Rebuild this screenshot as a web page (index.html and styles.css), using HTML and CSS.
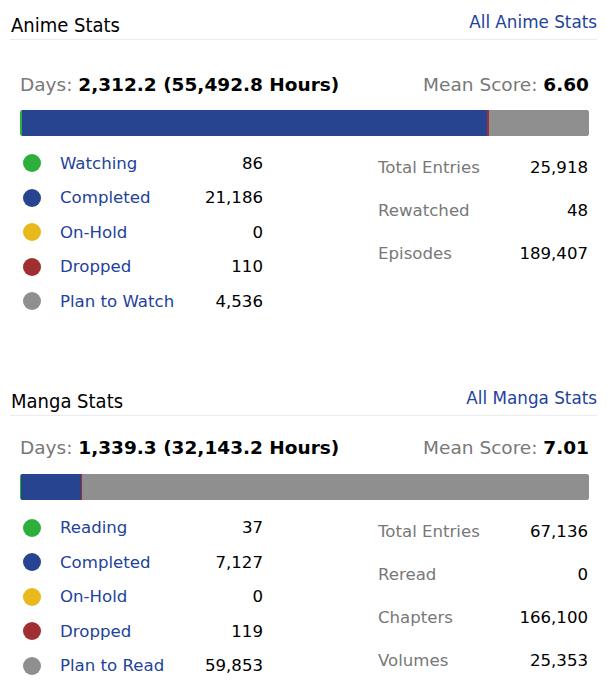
FILE: index.html
```html
<!DOCTYPE html>
<html>
<head>
<meta charset="utf-8">
<link rel="stylesheet" href="styles.css">
</head>
<body>
<div class="page">
  <section class="stats anime">
    <div class="head">
      <h2>Anime Stats</h2>
      <a class="all" href="#">All Anime Stats</a>
    </div>
    <div class="summary">
      <div><span class="lbl">Days:</span> <b>2,312.2 (55,492.8 Hours)</b></div>
      <div><span class="lbl">Mean Score:</span> <b>6.60</b></div>
    </div>
    <div class="bar">
      <span class="seg green" style="width:0.33%"></span>
      <span class="seg blue" style="width:81.74%"></span>
      <span class="seg red" style="width:0.42%"></span>
      <span class="seg grey" style="width:17.51%"></span>
    </div>
    <div class="cols">
      <ul class="legend">
        <li><i class="dot green"></i><a href="#">Watching</a><span class="num">86</span></li>
        <li><i class="dot blue"></i><a href="#">Completed</a><span class="num">21,186</span></li>
        <li><i class="dot yellow"></i><a href="#">On-Hold</a><span class="num">0</span></li>
        <li><i class="dot red"></i><a href="#">Dropped</a><span class="num">110</span></li>
        <li><i class="dot grey"></i><a href="#">Plan to Watch</a><span class="num">4,536</span></li>
      </ul>
      <ul class="totals">
        <li><span class="lbl">Total Entries</span><span class="num">25,918</span></li>
        <li><span class="lbl">Rewatched</span><span class="num">48</span></li>
        <li><span class="lbl">Episodes</span><span class="num">189,407</span></li>
      </ul>
    </div>
  </section>
  <section class="stats manga">
    <div class="head">
      <h2>Manga Stats</h2>
      <a class="all" href="#">All Manga Stats</a>
    </div>
    <div class="summary">
      <div><span class="lbl">Days:</span> <b>1,339.3 (32,143.2 Hours)</b></div>
      <div><span class="lbl">Mean Score:</span> <b>7.01</b></div>
    </div>
    <div class="bar">
      <span class="seg green" style="width:0.2%"></span>
      <span class="seg blue" style="width:10.6%"></span>
      <span class="seg red" style="width:0.18%"></span>
      <span class="seg grey" style="flex:1"></span>
    </div>
    <div class="cols">
      <ul class="legend">
        <li><i class="dot green"></i><a href="#">Reading</a><span class="num">37</span></li>
        <li><i class="dot blue"></i><a href="#">Completed</a><span class="num">7,127</span></li>
        <li><i class="dot yellow"></i><a href="#">On-Hold</a><span class="num">0</span></li>
        <li><i class="dot red"></i><a href="#">Dropped</a><span class="num">119</span></li>
        <li><i class="dot grey"></i><a href="#">Plan to Read</a><span class="num">59,853</span></li>
      </ul>
      <ul class="totals">
        <li><span class="lbl">Total Entries</span><span class="num">67,136</span></li>
        <li><span class="lbl">Reread</span><span class="num">0</span></li>
        <li><span class="lbl">Chapters</span><span class="num">166,100</span></li>
        <li><span class="lbl">Volumes</span><span class="num">25,353</span></li>
      </ul>
    </div>
  </section>
</div>
</body>
</html>
```

FILE: styles.css
```css
* { box-sizing: border-box; }
html, body { margin: 0; padding: 0; background: #fff; }
body {
  font-family: "DejaVu Sans", Verdana, sans-serif;
  font-size: 16.6px;
  color: #000;
}
.page { width: 597px; padding-left: 10px; }
.stats { display: flex; flex-direction: column; }
.head {
  display: flex;
  justify-content: space-between;
  align-items: flex-start;
  border-bottom: 1px solid #ebebeb;
  height: 40px;
}
.head h2 {
  margin: 0;
  padding: 13px 0 0 1px;
  font-family: "DejaVu Sans Condensed", "DejaVu Sans", sans-serif;
  font-weight: normal;
  font-size: 20px;
  line-height: 24px;
}
.all {
  padding-top: 12px;
  color: #1d439b;
  text-decoration: none;
  font-size: 16.8px;
  line-height: 20px;
}
.summary {
  display: flex;
  justify-content: space-between;
  padding: 0 8px 0 10px;
  font-size: 18.5px;
  line-height: 22px;
  margin-top: 34px;
}
.manga .summary { margin-top: 21px; }
.lbl { color: #787878; }
.bar {
  display: flex;
  margin: 14px 8px 0 10px;
  height: 26px;
  border-radius: 3px;
  overflow: hidden;
  background: #8f8f8f;
}
.manga .bar { margin-top: 15px; }
.seg { display: block; height: 100%; }
.green { background: #2db039; }
.blue { background: #26448f; }
.yellow { background: #e9b81b; }
.red { background: #a12f31; }
.grey { background: #8f8f8f; }
.cols {
  display: flex;
  justify-content: space-between;
  padding: 0 9px 0 13px;
  margin-top: 10px;
}
ul { list-style: none; margin: 0; padding: 0; }
.legend { width: 240px; }
.legend li {
  display: flex;
  align-items: center;
  height: 34.5px;
}
.dot {
  width: 18px;
  height: 18px;
  border-radius: 50%;
  margin-right: 19px;
  flex: none;
}
.legend a { color: #1d439b; text-decoration: none; }
.num { margin-left: auto; }
.totals { width: 210px; padding-top: 12px; }
.manga .totals { padding-top: 11px; }
.totals li {
  display: flex;
  height: 43px;
  line-height: 20px;
}
.manga .cols { margin-top: 11px; margin-bottom: 10px; }
.anime { margin-bottom: 57px; }
```
